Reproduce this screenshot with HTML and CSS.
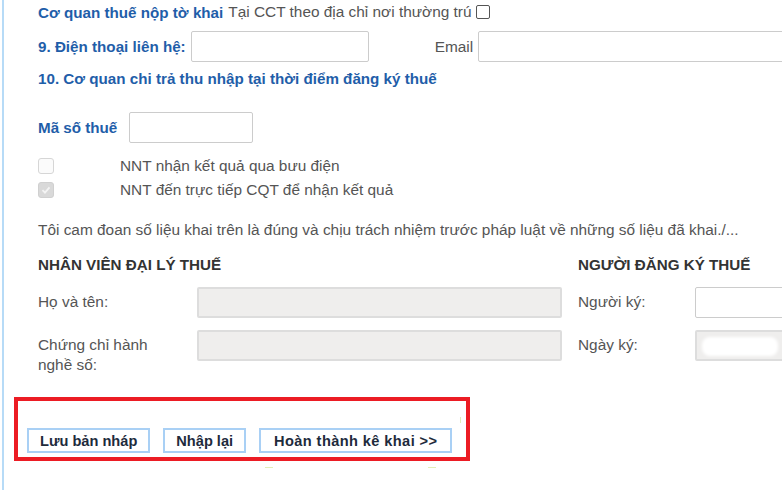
FILE: index.html
```html
<!DOCTYPE html>
<html lang="vi">
<head>
<meta charset="utf-8">
<link rel="stylesheet" href="styles.css">
</head>
<body>
<div class="page">
  <div class="content">
    <div class="row r1">
      <span class="lbl-b">Cơ quan thuế nộp tờ khai</span>
      <span class="txt">Tại CCT theo địa chỉ nơi thường trú</span>
      <span class="cb"></span>
    </div>
    <div class="row r2">
      <span class="lbl-b">9. Điện thoại liên hệ:</span>
      <span class="input phone"></span>
      <span class="txt email-lbl">Email</span>
      <span class="input email"></span>
    </div>
    <div class="row r3">
      <span class="lbl-b">10. Cơ quan chi trả thu nhập tại thời điểm đăng ký thuế</span>
    </div>
    <div class="row r4">
      <span class="lbl-b">Mã số thuế</span>
      <span class="input mst"></span>
    </div>
    <div class="checks">
      <div class="check-row">
        <span class="dcb"></span>
        <span class="txt">NNT nhận kết quả qua bưu điện</span>
      </div>
      <div class="check-row">
        <span class="dcb checked"><svg viewBox="0 0 16 16" width="16" height="16"><path d="M4 8.2 L6.8 11 L12 5" fill="none" stroke="#f4f4f4" stroke-width="2"/></svg></span>
        <span class="txt">NNT đến trực tiếp CQT để nhận kết quả</span>
      </div>
    </div>
    <p class="txt statement">Tôi cam đoan số liệu khai trên là đúng và chịu trách nhiệm trước pháp luật về những số liệu đã khai./...</p>
    <div class="sign">
      <div class="head">NHÂN VIÊN ĐẠI LÝ THUẾ</div>
      <div class="head col3">NGƯỜI ĐĂNG KÝ THUẾ</div>
      <div class="txt flbl">Họ và tên:</div>
      <div class="input dis"></div>
      <div class="txt flbl right">Người ký:</div>
      <div class="input"></div>
      <div class="txt flbl">Chứng chỉ hành<br>nghề số:</div>
      <div class="input dis"></div>
      <div class="txt flbl right">Ngày ký:</div>
      <div class="input dis date"><span class="blur"></span></div>
    </div>
    <div class="actions-wrap">
      <div class="actions">
        <button class="btn">Lưu bản nháp</button>
        <button class="btn">Nhập lại</button>
        <button class="btn wide">Hoàn thành kê khai &gt;&gt;</button>
      </div>
      <span class="mark m1"></span>
      <span class="mark m2"></span>
      <span class="mark m3"></span>
    </div>
  </div>
</div>
</body>
</html>
```
FILE: styles.css
```css
html, body {
  margin: 0;
  padding: 0;
  background: #fff;
  overflow: hidden;
  width: 782px;
  height: 490px;
}
body {
  font-family: "Liberation Sans", Arial, sans-serif;
  font-size: 15px;
  color: #555;
}
.page {
  margin-left: 2px;
  border-left: 2px solid #b7dbf7;
  height: 490px;
}
.content {
  padding-left: 34px;
  width: 760px;
}
.row {
  display: flex;
  align-items: center;
  white-space: nowrap;
}
.lbl-b {
  color: #1f5ea9;
  font-weight: bold;
  font-size: 15.2px;
}
.txt {
  color: #555;
  font-size: 15.4px;
}
.r1 {
  height: 24px;
}
.r1 .lbl-b { margin-right: 5px; }
.cb {
  display: inline-block;
  width: 12px;
  height: 12px;
  border: 1px solid #555;
  border-radius: 2px;
  margin-left: 4px;
}
.r2 {
  margin-top: 7px;
  height: 31px;
}
.input {
  display: block;
  box-sizing: border-box;
  height: 31px;
  border: 1px solid #ccc;
  background: #fff;
  border-radius: 2px;
}
.phone {
  width: 178px;
  margin-left: 5px;
}
.email-lbl {
  margin-left: 66px;
  margin-right: 5px;
}
.email {
  width: 320px;
}
.r3 {
  height: 32px;
}
.r4 {
  margin-top: 18px;
  height: 31px;
}
.r4 .lbl-b { margin-right: 12px; }
.mst {
  width: 124px;
}
.checks {
  margin-top: 11px;
}
.check-row {
  display: flex;
  align-items: center;
  height: 24px;
}
.dcb {
  box-sizing: border-box;
  width: 16px;
  height: 16px;
  border: 1px solid #d6d6d6;
  border-radius: 3px;
  background: #fbfbfb;
  margin-right: 66px;
  display: flex;
  align-items: center;
  justify-content: center;
}
.dcb.checked {
  background: #d9d9d9;
  border-color: #d0d0d0;
}
.dcb svg { display: block; }
.statement {
  margin: 18px 0 0 0;
  white-space: nowrap;
  height: 20px;
  line-height: 20px;
}
.sign {
  display: grid;
  grid-template-columns: 159px 365px 133px 100px;
  margin-top: 15px;
  align-items: start;
}
.head {
  color: #333;
  font-weight: bold;
  font-size: 15.2px;
  grid-column: 1 / span 2;
  height: 20px;
  line-height: 20px;
  margin-bottom: 12px;
}
.head.col3 {
  grid-column: 3 / span 2;
  margin-left: 16px;
}
.sign .flbl {
  line-height: 20px;
  padding-top: 5px;
}
.sign .flbl.right {
  margin-left: 16px;
}
.sign .input {
  margin-bottom: 12px;
}
.input.dis {
  background: #efeeed;
  border: 2px solid #dddddd;
}
.date {
  position: relative;
  overflow: hidden;
}
.blur {
  position: absolute;
  left: 5px;
  top: 5px;
  width: 76px;
  height: 19px;
  background: #fff;
  border-radius: 8px;
  filter: blur(1.5px);
}
.actions-wrap {
  position: relative;
  margin-top: 22px;
  margin-left: -24px;
  width: 448px;
  height: 56px;
  border: 4px solid #ec1c24;
}
.actions {
  display: flex;
  gap: 13px;
  padding: 27px 0 0 9px;
}
.btn {
  font-family: "Liberation Sans", Arial, sans-serif;
  font-weight: bold;
  font-size: 14.6px;
  color: #1e2b3c;
  background: #fff;
  border: 2px solid #a9d0f5;
  height: 25px;
  padding: 0 11px;
  margin: 0;
  line-height: 20px;
}
.btn.wide {
  padding: 0 13px;
  letter-spacing: 0.4px;
}
.mark {
  position: absolute;
  background: #e2efb8;
}
.m1 { left: 442px; top: 16px; width: 1px; height: 6px; }
.m2 { left: 247px; top: 66px; width: 8px; height: 1px; }
.m3 { left: 410px; top: 66px; width: 8px; height: 1px; }
```
